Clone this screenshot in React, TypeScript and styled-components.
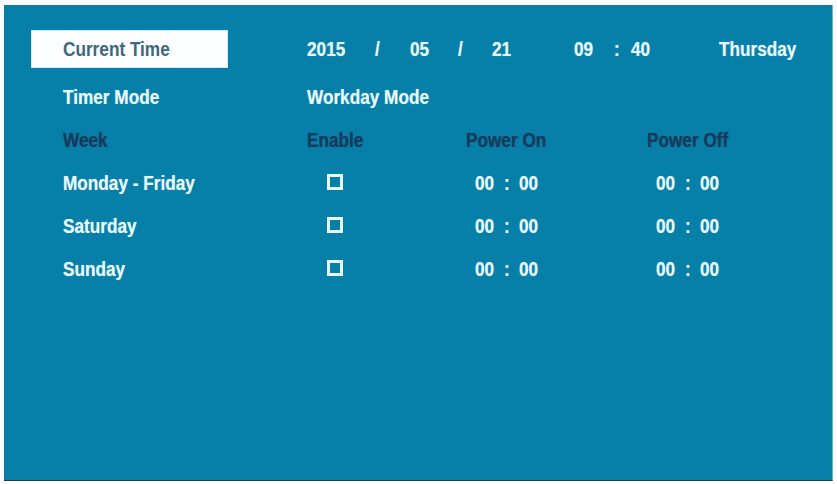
import React from "react";
import styled, { createGlobalStyle } from "styled-components";

const Global = createGlobalStyle`
  html, body { margin: 0; padding: 0; background: #ffffff; }
  body { font-family: "Liberation Sans", Arial, sans-serif; }
  #root { padding: 5px 4px 3px 4px; }
`;

const Screen = styled.div`
  width: 829px;
  height: 476px;
  box-sizing: border-box;
  background: #0780a9;
  border-bottom: 1px solid #1c3d50;
  border-right: 1px solid #5fb8d4;
  padding: 26px 0 0 59px;
  display: flex;
  flex-direction: column;
`;

const Row = styled.div<{ $h?: number; $gap?: number }>`
  display: flex;
  align-items: center;
  height: ${(p) => p.$h ?? 43}px;
  margin-top: ${(p) => p.$gap ?? 0}px;
`;

const LabelCell = styled.div<{ $active?: boolean }>`
  width: ${(p) => (p.$active ? 195 : 244)}px;
  margin-left: ${(p) => (p.$active ? -31 : 0)}px;
  padding-left: ${(p) => (p.$active ? 31 : 0)}px;
  margin-right: ${(p) => (p.$active ? 80 : 0)}px;
  height: 36px;
  box-sizing: border-box;
  display: flex;
  align-items: center;
  background: ${(p) => (p.$active ? "#fdfeff" : "transparent")};
  box-shadow: ${(p) => (p.$active ? "0 0 0 1px #cfeaf3" : "none")};
`;

const Text = styled.span<{ $tone?: "light" | "dark" | "focus" }>`
  display: inline-block;
  font-family: "Liberation Sans", Arial, sans-serif;
  font-weight: bold;
  font-size: 20px;
  line-height: 1;
  white-space: nowrap;
  transform: scaleX(0.86);
  transform-origin: left center;
  color: ${(p) =>
    p.$tone === "dark" ? "#173b5c" : p.$tone === "focus" ? "#3f687c" : "#e8fbff"};
  text-shadow: ${(p) =>
    p.$tone === "dark" ? "0 0 1px rgba(20,50,80,0.6)" : "0 0 1px rgba(230,250,255,0.5)"};
`;

const Cell = styled.div<{ $w?: number; $pad?: number }>`
  flex: ${(p) => (p.$w ? `0 0 ${p.$w}px` : "1 1 auto")};
  padding-left: ${(p) => p.$pad ?? 0}px;
  box-sizing: border-box;
  display: flex;
  align-items: center;
`;

const TimeBox = styled.div`
  display: flex;
  align-items: center;
`;

const Check = styled.div`
  width: 16px;
  height: 16px;
  box-sizing: border-box;
  border: 3px solid #e8fbff;
  margin-left: 20px;
  margin-top: -1px;
`;

const Time: React.FC = () => (
  <TimeBox>
    <Cell $w={29}>
      <Text>00</Text>
    </Cell>
    <Cell $w={15}>
      <Text>:</Text>
    </Cell>
    <Cell $w={24}>
      <Text>00</Text>
    </Cell>
  </TimeBox>
);

const dateParts: Array<[string, number]> = [
  ["2015", 68],
  ["/", 35],
  ["05", 48],
  ["/", 34],
  ["21", 82],
  ["09", 40],
  [":", 17],
  ["40", 88],
  ["Thursday", 0],
];

const days = ["Monday - Friday", "Saturday", "Sunday"];

export default function App() {
  return (
    <>
      <Global />
      <Screen>
        <Row $h={36}>
          <LabelCell $active>
            <Text $tone="focus">Current Time</Text>
          </LabelCell>
          {dateParts.map(([t, w], i) => (
            <Cell key={i} $w={w || undefined}>
              <Text>{t}</Text>
            </Cell>
          ))}
        </Row>
        <Row $gap={8}>
          <LabelCell>
            <Text>Timer Mode</Text>
          </LabelCell>
          <Cell>
            <Text>Workday Mode</Text>
          </Cell>
        </Row>
        <Row>
          <LabelCell>
            <Text $tone="dark">Week</Text>
          </LabelCell>
          <Cell $w={159}>
            <Text $tone="dark">Enable</Text>
          </Cell>
          <Cell $w={181}>
            <Text $tone="dark">Power On</Text>
          </Cell>
          <Cell>
            <Text $tone="dark">Power Off</Text>
          </Cell>
        </Row>
        {days.map((d) => (
          <Row key={d}>
            <LabelCell>
              <Text>{d}</Text>
            </LabelCell>
            <Cell $w={159}>
              <Check />
            </Cell>
            <Cell $w={181} $pad={9}>
              <Time />
            </Cell>
            <Cell $pad={9}>
              <Time />
            </Cell>
          </Row>
        ))}
      </Screen>
    </>
  );
}
